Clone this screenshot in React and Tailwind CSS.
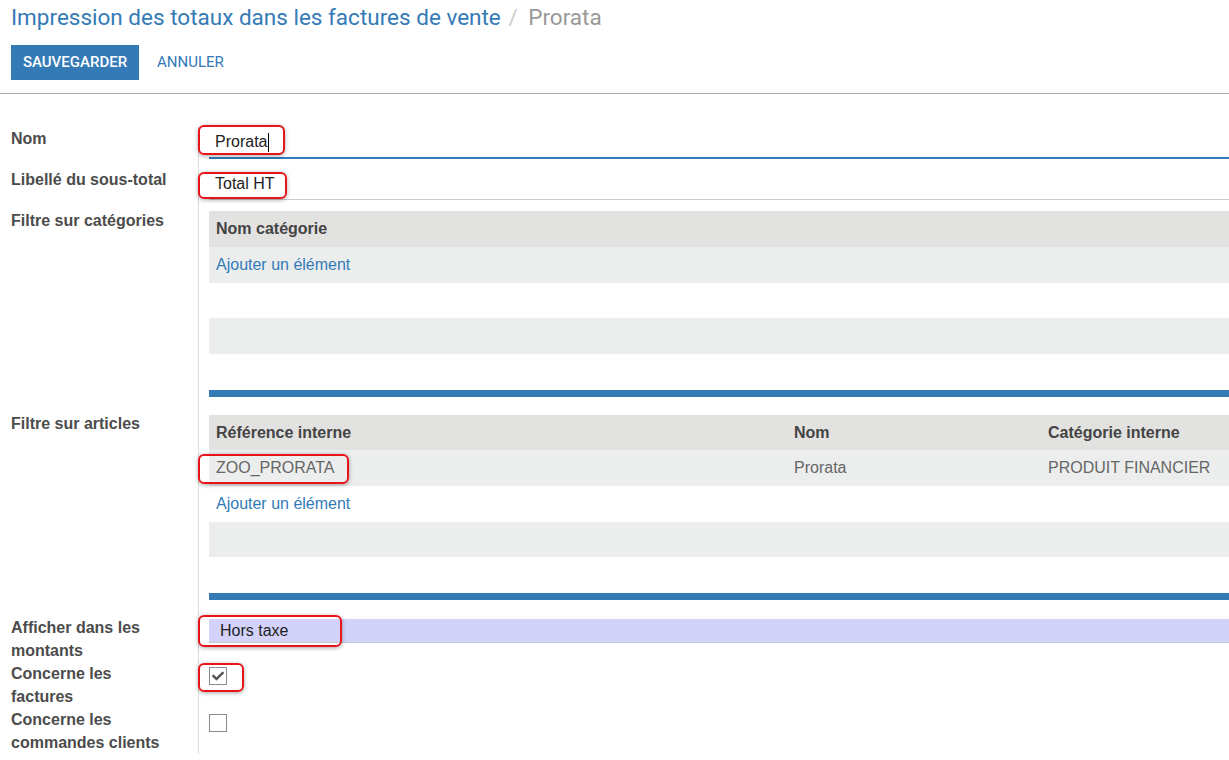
import { FaCheck } from 'react-icons/fa';

const labelCls = "w-[199px] shrink-0 border-r border-[#dcdcdc] pl-[11px] pr-[27px] font-bold text-[16px] leading-[23px] text-[#4c4c4c]";
const mark = "pointer-events-none absolute rounded-[6px] border-2 border-[#e8141c] shadow-[0_1px_4px_rgba(0,0,0,0.35)]";

function Row({ label, labelPad, children }) {
  return (
    <div className="flex">
      <div className={labelCls} style={{ paddingTop: labelPad }}>{label}</div>
      <div className="relative flex-1 pl-[10px]">{children}</div>
    </div>
  );
}

function BlueRule() {
  return <div className="h-[7px] bg-[#337ab7]" />;
}

export default function App() {
  return (
    <div className="min-h-screen bg-white font-['Liberation_Sans',Arial,sans-serif] overflow-hidden">
      {/* control panel */}
      <div className="border-b border-[#aaaaaa] pl-[11px] pt-[4px] pb-[13px]">
        <h1 className="font-['Roboto',sans-serif] text-[22.5px] leading-[26px] text-[#337ab7]">
          Impression des totaux dans les factures de vente
          <span className="ml-[2px] text-[#cccccc]"> / </span>
          <span className="ml-[5px] text-[#999999]">Prorata</span>
        </h1>
        <div className="mt-[15px] flex items-center gap-[18px]">
          <button className="h-[35px] w-[128px] bg-[#337ab7] font-['Roboto',sans-serif] text-[15px] font-medium uppercase text-white">Sauvegarder</button>
          <button className="font-['Roboto',sans-serif] text-[15px] uppercase text-[#337ab7]">Annuler</button>
        </div>
      </div>

      <div className="pt-[33px] text-[16px]">
        <Row label="Nom" labelPad={0}>
          <div className="flex h-[32px] items-center border-b-2 border-[#337ab7] pl-[6px] text-[#222]">
            Prorata<span className="ml-[1px] inline-block h-[19px] w-px bg-black" />
          </div>
          <div className={mark} style={{ top: -2, left: -1, width: 87, height: 30 }} />
        </Row>

        <Row label="Libellé du sous-total" labelPad={9}>
          <div className="pt-[10px]">
            <div className="flex h-[31px] items-center border-b border-[#cccccc] pl-[6px] text-[#222]">Total HT</div>
          </div>
          <div className={mark} style={{ top: 13, left: -1, width: 89, height: 27 }} />
        </Row>

        <Row label="Filtre sur catégories" labelPad={9}>
          <div className="pt-[11px]">
            <div className="flex h-[36px] items-center bg-[#e2e2e0] pl-[7px] font-bold text-[#444]">Nom catégorie</div>
            <div className="flex h-[36px] items-center bg-[#eceeed] pl-[7px] text-[#337ab7]">Ajouter un élément</div>
            <div className="h-[35px] bg-white" />
            <div className="h-[36px] bg-[#eceeed]" />
            <div className="h-[36px] bg-white" />
            <BlueRule />
          </div>
        </Row>

        <Row label="Filtre sur articles" labelPad={15}>
          <div className="pt-[18px]">
            <div className="grid h-[35px] grid-cols-[578px_254px_1fr] items-center bg-[#e2e2e0] font-bold text-[#444]">
              <span className="pl-[7px]">Référence interne</span>
              <span className="pl-[7px]">Nom</span>
              <span className="pl-[7px] whitespace-nowrap">Catégorie interne</span>
            </div>
            <div className="grid h-[36px] grid-cols-[578px_254px_1fr] items-center bg-[#eceeed] text-[#666]">
              <span className="pl-[7px]">ZOO_PRORATA</span>
              <span className="pl-[7px]">Prorata</span>
              <span className="pl-[7px] whitespace-nowrap">PRODUIT FINANCIER</span>
            </div>
            <div className="flex h-[36px] items-center bg-white pl-[7px] text-[#337ab7]">Ajouter un élément</div>
            <div className="h-[35px] bg-[#eceeed]" />
            <div className="h-[36px] bg-white" />
            <BlueRule />
          </div>
          <div className={mark} style={{ top: 57, left: -1, width: 151, height: 30 }} />
        </Row>

        <Row label="Afficher dans les montants" labelPad={16}>
          <div className="pt-[19px]">
            <div className="flex h-[24px] items-center border-b border-[#c4c4d8] bg-[#d2d2fb] pl-[11px] text-[#222]">Hors taxe</div>
          </div>
          <div className={mark} style={{ top: 15, left: -1, width: 144, height: 32 }} />
        </Row>

        <Row label="Concerne les factures" labelPad={0}>
          <div className="pt-[5px]">
            <div className="flex h-[18px] w-[18px] items-center justify-center border border-[#8a8a8a] bg-white">
              <FaCheck size={12} className="text-[#555]" />
            </div>
          </div>
          <div className={mark} style={{ top: 1, left: -1, width: 46, height: 29 }} />
        </Row>

        <Row label="Concerne les commandes clients" labelPad={0}>
          <div className="pt-[6px]">
            <div className="h-[18px] w-[18px] border border-[#8a8a8a] bg-white" />
          </div>
        </Row>
      </div>
    </div>
  );
}
